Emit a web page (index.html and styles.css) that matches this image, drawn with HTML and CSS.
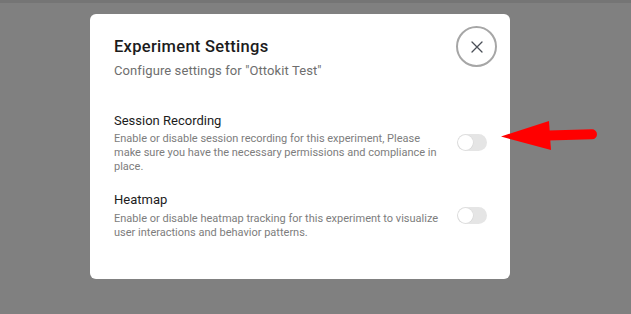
FILE: index.html
```html
<!DOCTYPE html>
<html lang="en">
<head>
<meta charset="utf-8">
<title>Experiment Settings</title>
<link rel="stylesheet" href="styles.css">
</head>
<body>
<div class="topbar"></div>
<div class="modal">
  <div class="header">
    <div class="heading">
      <h2 class="title">Experiment Settings</h2>
      <p class="subtitle">Configure settings for "Ottokit Test"</p>
    </div>
    <button class="close" aria-label="Close">
      <svg width="12" height="12" viewBox="0 0 12 12"><path d="M1 1L11 11M11 1L1 11" stroke="#4a4f57" stroke-width="1.3" stroke-linecap="round" fill="none"/></svg>
    </button>
  </div>
  <div class="settings">
    <div class="row">
      <div class="text">
        <div class="label">Session Recording</div>
        <div class="desc">Enable or disable session recording for this experiment, Please make sure you have the necessary permissions and compliance in place.</div>
      </div>
      <span class="toggle"><span class="knob"></span></span>
    </div>
    <div class="row">
      <div class="text">
        <div class="label">Heatmap</div>
        <div class="desc">Enable or disable heatmap tracking for this experiment to visualize user interactions and behavior patterns.</div>
      </div>
      <span class="toggle"><span class="knob"></span></span>
    </div>
  </div>
</div>
<svg class="arrow" width="631" height="314" viewBox="0 0 631 314">
  <line x1="548" y1="135.5" x2="592" y2="134.3" stroke="#ff0000" stroke-width="10" stroke-linecap="round"/>
  <polygon points="501,136.5 549,121 551,150" fill="#ff0000"/>
</svg>
</body>
</html>
```
FILE: styles.css
```css
* { box-sizing: border-box; }
html, body { margin: 0; padding: 0; }
body {
  width: 631px;
  height: 314px;
  overflow: hidden;
  background: #808080;
  font-family: Roboto, "Liberation Sans", sans-serif;
  position: relative;
}
.topbar {
  height: 3px;
  background: #757575;
}
.modal {
  margin: 11px 0 0 90px;
  width: 420px;
  height: 265px;
  background: #ffffff;
  border-radius: 6px;
  padding: 12px 13px 0 24px;
}
.header {
  display: flex;
  justify-content: space-between;
  align-items: flex-start;
}
.heading { padding-top: 10px; }
.title {
  margin: 0;
  font-size: 16.5px;
  line-height: 22px;
  font-weight: 500;
  letter-spacing: 0.3px;
  color: #1c1c1c;
}
.subtitle {
  margin: 3.5px 0 0;
  font-size: 13px;
  line-height: 18px;
  letter-spacing: 0.1px;
  color: #6e6e6e;
}
.close {
  width: 41px;
  height: 41px;
  border-radius: 50%;
  border: 2px solid #a6a6a6;
  background: #fff;
  padding: 0;
  display: flex;
  align-items: center;
  justify-content: center;
}
.settings {
  margin-top: 32px;
  padding-right: 10px;
  display: flex;
  flex-direction: column;
  gap: 17px;
}
.row {
  display: flex;
  align-items: center;
  gap: 12px;
}
.text { flex: 1; }
.label {
  font-size: 13px;
  line-height: 18px;
  color: #1c1c1c;
}
.desc {
  margin-top: 2.5px;
  font-size: 11px;
  line-height: 14px;
  color: #7d7d7d;
}
.toggle {
  flex: none;
  width: 30px;
  height: 17px;
  border-radius: 9px;
  background: #e5e5e5;
  position: relative;
}
.knob {
  position: absolute;
  left: 1px;
  top: 1px;
  width: 15px;
  height: 15px;
  border-radius: 50%;
  background: #fff;
  box-shadow: 0 0 0 0.6px #d8d8d8;
}
.arrow {
  position: absolute;
  left: 0;
  top: 0;
  pointer-events: none;
}
```
